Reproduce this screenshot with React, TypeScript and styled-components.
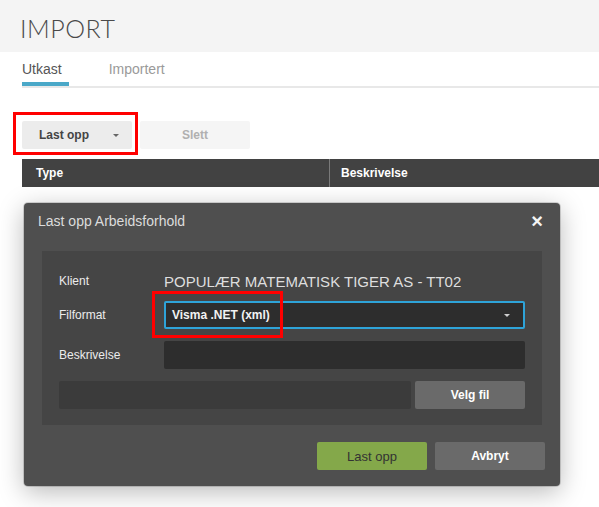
import styled, { createGlobalStyle } from 'styled-components'

const GlobalStyle = createGlobalStyle`
  html, body {
    margin: 0;
    padding: 0;
    background: #ffffff;
    font-family: 'Liberation Sans', Arial, sans-serif;
  }
`

const Page = styled.div`
  width: 599px;
  height: 507px;
  overflow: hidden;
  background: #ffffff;
`

const Header = styled.div`
  height: 52px;
  background: #f4f4f4;
  padding-left: 20px;
  display: flex;
  align-items: center;
  box-sizing: border-box;
`

const Title = styled.h1`
  margin: 4px 0 0;
  font-family: Lato, 'Open Sans', sans-serif;
  font-weight: 300;
  font-size: 25px;
  letter-spacing: 0.5px;
  color: #4a4a4a;
`

const Content = styled.div`
  padding-left: 22px;
`

const Tabs = styled.div`
  display: flex;
  margin-top: 7px;
  border-bottom: 2px solid #e8e8e8;
`

const Tab = styled.div<{ $active?: boolean }>`
  font-size: 14px;
  line-height: 20px;
  padding: 0 7px 3px 0;
  margin-right: 40px;
  color: ${(p) => (p.$active ? '#555555' : '#9a9a9a')};
  border-bottom: 4px solid ${(p) => (p.$active ? '#4aa8c8' : 'transparent')};
`

const Toolbar = styled.div`
  display: flex;
  gap: 8px;
  margin-top: 33px;
`

const ToolButton = styled.div<{ $disabled?: boolean }>`
  position: relative;
  width: 110px;
  height: 28px;
  box-sizing: border-box;
  display: flex;
  align-items: center;
  justify-content: ${(p) => (p.$disabled ? 'center' : 'flex-start')};
  padding-left: ${(p) => (p.$disabled ? '0' : '17px')};
  background: ${(p) => (p.$disabled ? '#f5f5f5' : '#ececec')};
  color: ${(p) => (p.$disabled ? '#b0b0b0' : '#444444')};
  font-size: 12px;
  font-weight: bold;
  border-radius: 2px;
`

const Caret = styled.span<{ $color: string }>`
  position: absolute;
  right: 13px;
  top: 50%;
  margin-top: -1px;
  border-left: 3px solid transparent;
  border-right: 3px solid transparent;
  border-top: 3px solid ${(p) => p.$color};
`

const Highlight = styled.div<{ $l: number; $t: number; $w: number; $h: number }>`
  position: absolute;
  left: ${(p) => p.$l}px;
  top: ${(p) => p.$t}px;
  width: ${(p) => p.$w}px;
  height: ${(p) => p.$h}px;
  box-sizing: border-box;
  border: 3px solid #ff0000;
  pointer-events: none;
`

const TableHead = styled.div`
  display: flex;
  width: 700px;
  height: 28px;
  margin-top: 10px;
  background: #424242;
  color: #ffffff;
  font-size: 12px;
  font-weight: bold;
`

const HeadCell = styled.div<{ $w: number; $divider?: boolean }>`
  width: ${(p) => p.$w}px;
  padding-left: ${(p) => (p.$divider ? 11 : 14)}px;
  display: flex;
  align-items: center;
  box-sizing: border-box;
  border-left: ${(p) => (p.$divider ? '1px solid #7a7a7a' : 'none')};
`

const Modal = styled.div`
  width: 536px;
  margin: 16px 0 0 24px;
  box-sizing: border-box;
  background: #4f4f4f;
  border-radius: 4px;
  box-shadow: 0 6px 26px rgba(0, 0, 0, 0.28), 0 0 0 1px rgba(0, 0, 0, 0.15);
  padding-bottom: 16px;
`

const ModalHeader = styled.div`
  height: 48px;
  display: flex;
  align-items: center;
  justify-content: space-between;
  padding: 0 17px 12px 14px;
  box-sizing: border-box;
`

const ModalTitle = styled.div`
  font-size: 14px;
  color: #dcdcdc;
`

const Close = styled.div`
  font-size: 20px;
  font-weight: bold;
  color: #f4f4f4;
  line-height: 1;
`

const Panel = styled.div`
  width: 500px;
  margin: 0 18px;
  background: #454545;
  padding: 16px 17px;
  box-sizing: border-box;
  display: flex;
  flex-direction: column;
  gap: 12px;
`

const Row = styled.div<{ $tight?: boolean }>`
  display: flex;
  align-items: center;
  height: 28px;
  margin-bottom: ${(p) => (p.$tight ? '-6px' : '0')};
`

const Label = styled.div`
  width: 105px;
  font-size: 12px;
  color: #ececec;
`

const Value = styled.div`
  font-size: 15px;
  color: #dedede;
`

const Field = styled.div<{ $focus?: boolean }>`
  position: relative;
  width: 361px;
  height: 28px;
  box-sizing: border-box;
  background: #2d2d2d;
  border: ${(p) => (p.$focus ? '2px solid #2ea3d8' : 'none')};
  border-radius: 2px;
  display: flex;
  align-items: center;
  padding-left: 6px;
  color: #f2f2f2;
  font-size: 12px;
  font-weight: bold;
`

const FileInput = styled.div`
  width: 352px;
  height: 28px;
  background: #3b3b3b;
  border-radius: 2px;
`

const Button = styled.div<{ $primary?: boolean }>`
  width: 110px;
  height: 28px;
  display: flex;
  align-items: center;
  justify-content: center;
  border-radius: 2px;
  font-size: ${(p) => (p.$primary ? '13px' : '12px')};
  background: ${(p) => (p.$primary ? '#84a84a' : '#6a6a6a')};
  color: ${(p) => (p.$primary ? '#333333' : '#ffffff')};
  font-weight: ${(p) => (p.$primary ? 'normal' : 'bold')};
`

const FileRow = styled.div`
  display: flex;
  gap: 4px;
`

const Footer = styled.div`
  display: flex;
  justify-content: flex-end;
  gap: 8px;
  margin-top: 17px;
  padding-right: 15px;
`

export default function App() {
  return (
    <>
      <GlobalStyle />
      <Page>
        <Header>
          <Title>IMPORT</Title>
        </Header>
        <Content>
          <Tabs>
            <Tab $active>Utkast</Tab>
            <Tab>Importert</Tab>
          </Tabs>
          <Toolbar>
            <ToolButton>
              Last opp
              <Caret $color="#666666" />
              <Highlight $l={-9} $t={-9} $w={125} $h={43} />
            </ToolButton>
            <ToolButton $disabled>Slett</ToolButton>
          </Toolbar>
          <TableHead>
            <HeadCell $w={307}>Type</HeadCell>
            <HeadCell $w={393} $divider>
              Beskrivelse
            </HeadCell>
          </TableHead>
        </Content>
        <Modal>
          <ModalHeader>
            <ModalTitle>Last opp Arbeidsforhold</ModalTitle>
            <Close>×</Close>
          </ModalHeader>
          <Panel>
            <Row $tight>
              <Label>Klient</Label>
              <Value>POPULÆR MATEMATISK TIGER AS - TT02</Value>
            </Row>
            <Row>
              <Label>Filformat</Label>
              <Field $focus>
                Visma .NET (xml)
                <Caret $color="#cfcfcf" />
                <Highlight $l={-14} $t={-12} $w={131} $h={47} />
              </Field>
            </Row>
            <Row>
              <Label>Beskrivelse</Label>
              <Field />
            </Row>
            <FileRow>
              <FileInput />
              <Button>Velg fil</Button>
            </FileRow>
          </Panel>
          <Footer>
            <Button $primary>Last opp</Button>
            <Button>Avbryt</Button>
          </Footer>
        </Modal>
      </Page>
    </>
  )
}
